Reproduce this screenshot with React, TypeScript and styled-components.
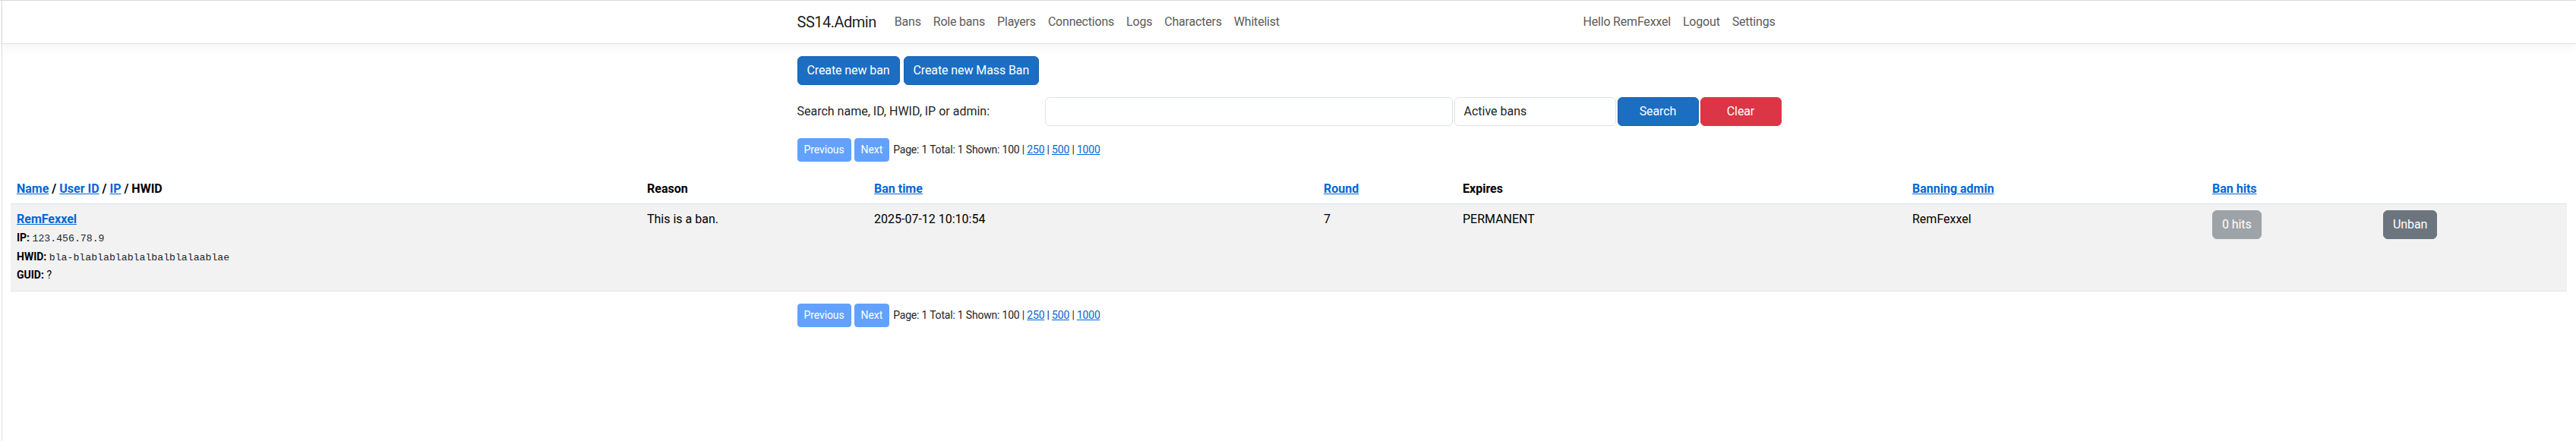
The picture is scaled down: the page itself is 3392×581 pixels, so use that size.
import React from "react";
import styled, { createGlobalStyle, css } from "styled-components";

const GlobalStyle = createGlobalStyle`
  *, *::before, *::after { box-sizing: border-box; }
  html, body { margin: 0; padding: 0; background: #fff; }
  body {
    font-family: Roboto, "Liberation Sans", Arial, sans-serif;
    font-size: 16px;
    line-height: 1.5;
    color: #212529;
  }
`;

const Frame = styled.div`
  border-top: 1px solid #dcdcdc;
`;

const Page = styled.div`
  margin-left: 2px;
  border-left: 1px solid #dcdcdc;
  min-height: 580px;
`;

const Navbar = styled.nav`
  background: #fff;
  border-bottom: 1px solid #dee2e6;
  box-shadow: 0 4px 12px rgba(0, 0, 0, 0.05);
  padding: 8px 0;
  margin-bottom: 16px;
`;

const Container = styled.div`
  max-width: 1320px;
  margin: 0 auto;
  padding: 0 12px;
`;

const NavInner = styled(Container)`
  display: flex;
  align-items: center;
`;

const Brand = styled.a`
  font-size: 20px;
  line-height: 30px;
  letter-spacing: -0.5px;
  padding: 5px 0;
  margin-right: 16px;
  color: rgba(0, 0, 0, 0.9);
  text-decoration: none;
`;

const NavList = styled.ul<{ $grow?: boolean }>`
  display: flex;
  list-style: none;
  margin: 0;
  padding: 0;
  ${(p) => p.$grow && css`flex: 1;`}
`;

const NavLink = styled.a`
  display: block;
  padding: 8px;
  line-height: 24px;
  letter-spacing: -0.2px;
  color: #5c5c5c;
  text-decoration: none;
`;

type Variant = "primary" | "danger" | "secondary" | "primaryOff" | "secondaryOff";

const variants: Record<Variant, { bg: string; border: string }> = {
  primary: { bg: "#1b6ec2", border: "#1861ac" },
  danger: { bg: "#dc3545", border: "#dc3545" },
  secondary: { bg: "#6c757d", border: "#6c757d" },
  primaryOff: { bg: "#62a1fe", border: "#62a1fe" },
  secondaryOff: { bg: "#9ea3a8", border: "#9ea3a8" },
};

const Button = styled.button<{ $variant: Variant; $small?: boolean; $block?: boolean }>`
  display: inline-block;
  font-family: inherit;
  color: #fff;
  background: ${(p) => variants[p.$variant].bg};
  border: 1px solid ${(p) => variants[p.$variant].border};
  border-radius: ${(p) => (p.$small ? "4px" : "6px")};
  padding: ${(p) => (p.$small ? "4px 8px" : "6px 12px")};
  font-size: ${(p) => (p.$small ? "14px" : "16px")};
  line-height: ${(p) => (p.$small ? "21px" : "24px")};
  letter-spacing: -0.1px;
  text-align: center;
  cursor: pointer;
  ${(p) => p.$block && css`width: 100%;`}
`;

const ActionRow = styled.div`
  display: flex;
  gap: 5px;
  margin-bottom: 16px;
`;

const SearchForm = styled.form`
  display: grid;
  grid-template-columns: 324px 1fr 213px 107px 107px;
  gap: 2px;
  align-items: center;
  margin-bottom: 16px;
`;

const SearchLabel = styled.label`
  font-size: 16px;
`;

const Field = styled.div`
  height: 38px;
  border: 1px solid #dee2e6;
  border-radius: 6px;
  padding: 6px 12px;
  line-height: 24px;
  background: #fff;
  color: #212529;
`;

const Pager = styled.div<{ $below?: boolean }>`
  display: flex;
  align-items: center;
  gap: 4px;
  font-size: 14px;
  margin-bottom: ${(p) => (p.$below ? "0" : "16px")};
`;

const PagerInfo = styled.span`
  margin-left: 1px;
  letter-spacing: -0.2px;
`;

const Link = styled.a<{ $bold?: boolean }>`
  color: #0366d6;
  text-decoration: underline;
  ${(p) => p.$bold && css`font-weight: 700;`}
`;

const TableWrap = styled.div`
  padding: 0 12px 0 11px;
`;

const Table = styled.table`
  width: 100%;
  border-collapse: collapse;
  table-layout: fixed;
  margin-bottom: 16px;
`;

const Col = styled.col<{ $w: number }>`
  width: ${(p) => p.$w}px;
`;

const Th = styled.th`
  text-align: left;
  padding: 8px 8px 7px;
  font-weight: 700;
  line-height: 24px;
  color: #000;
  border-bottom: 1px solid #dee2e6;
  vertical-align: bottom;
`;

const BodyRow = styled.tr`
  background: #f2f2f2;
`;

const Td = styled.td`
  padding: 8px;
  vertical-align: top;
  line-height: 24px;
  color: #000;
  border-bottom: 1px solid #dee2e6;
`;

const Detail = styled.div`
  font-size: 14px;
  line-height: 24.6px;
  height: 24.6px;
`;

const Label = styled.b`
  font-weight: 700;
`;

const Code = styled.code`
  font-family: "Liberation Mono", "DejaVu Sans Mono", monospace;
  font-size: 13.2px;
  line-height: 1;
  color: #212529;
`;

const navItems = ["Bans", "Role bans", "Players", "Connections", "Logs", "Characters", "Whitelist"];
const userItems = ["Hello RemFexxel", "Logout", "Settings"];

const columns = [830, 299, 592, 183, 592, 395, 225, 250];

function Pagination({ below }: { below?: boolean }) {
  return (
    <Pager $below={below}>
      <Button $variant="primaryOff" $small>Previous</Button>
      <Button $variant="primaryOff" $small>Next</Button>
      <PagerInfo>
        Page: 1 Total: 1 Shown: 100 | <Link>250</Link> | <Link>500</Link> | <Link>1000</Link>
      </PagerInfo>
    </Pager>
  );
}

export default function App() {
  return (
    <>
      <GlobalStyle />
      <Frame>
        <Page>
          <Navbar>
            <NavInner>
              <Brand>SS14.Admin</Brand>
              <NavList $grow>
                {navItems.map((n) => (
                  <li key={n}>
                    <NavLink>{n}</NavLink>
                  </li>
                ))}
              </NavList>
              <NavList>
                {userItems.map((n) => (
                  <li key={n}>
                    <NavLink>{n}</NavLink>
                  </li>
                ))}
              </NavList>
            </NavInner>
          </Navbar>

          <Container>
            <ActionRow>
              <Button $variant="primary">Create new ban</Button>
              <Button $variant="primary">Create new Mass Ban</Button>
            </ActionRow>
            <SearchForm>
              <SearchLabel>Search name, ID, HWID, IP or admin:</SearchLabel>
              <Field />
              <Field>Active bans</Field>
              <Button $variant="primary" $block>Search</Button>
              <Button $variant="danger" $block>Clear</Button>
            </SearchForm>
            <Pagination />
          </Container>

          <TableWrap>
            <Table>
              <colgroup>
                {columns.map((w, i) => (
                  <Col key={i} $w={w} />
                ))}
              </colgroup>
              <thead>
                <tr>
                  <Th>
                    <Link>Name</Link> / <Link>User ID</Link> / <Link>IP</Link> / HWID
                  </Th>
                  <Th>Reason</Th>
                  <Th>
                    <Link>Ban time</Link>
                  </Th>
                  <Th>
                    <Link>Round</Link>
                  </Th>
                  <Th>Expires</Th>
                  <Th>
                    <Link>Banning admin</Link>
                  </Th>
                  <Th>
                    <Link>Ban hits</Link>
                  </Th>
                  <Th />
                </tr>
              </thead>
              <tbody>
                <BodyRow>
                  <Td>
                    <Link $bold>RemFexxel</Link>
                    <Detail>
                      <Label>IP:</Label> <Code>123.456.78.9</Code>
                    </Detail>
                    <Detail>
                      <Label>HWID:</Label> <Code>bla-blablablablalbalblalaablae</Code>
                    </Detail>
                    <Detail>
                      <Label>GUID:</Label> ?
                    </Detail>
                  </Td>
                  <Td>This is a ban.</Td>
                  <Td>2025-07-12 10:10:54</Td>
                  <Td>7</Td>
                  <Td>PERMANENT</Td>
                  <Td>RemFexxel</Td>
                  <Td>
                    <Button $variant="secondaryOff">0 hits</Button>
                  </Td>
                  <Td>
                    <Button $variant="secondary">Unban</Button>
                  </Td>
                </BodyRow>
              </tbody>
            </Table>
          </TableWrap>

          <Container>
            <Pagination below />
          </Container>
        </Page>
      </Frame>
    </>
  );
}
